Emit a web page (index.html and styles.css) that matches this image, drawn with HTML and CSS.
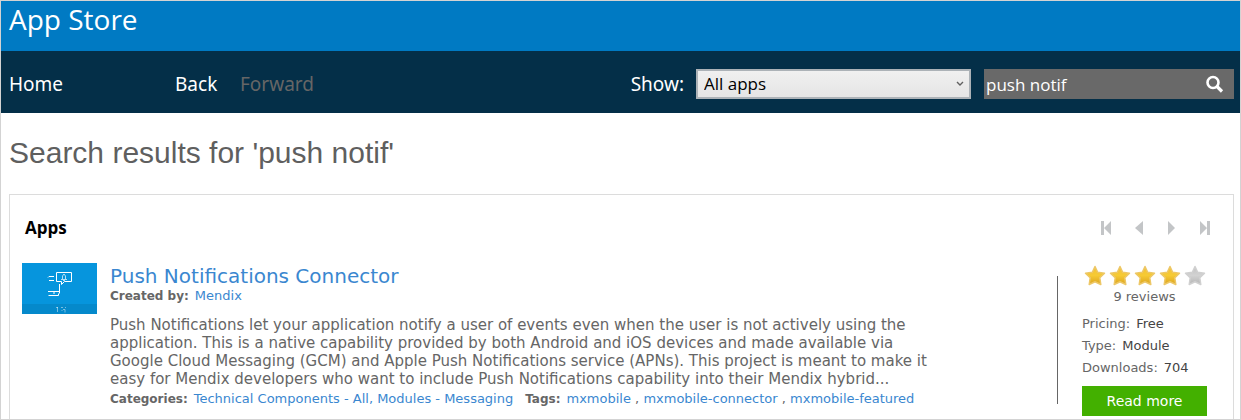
FILE: index.html
```html
<!DOCTYPE html>
<html lang="en">
<head>
<meta charset="utf-8">
<title>App Store</title>
<link rel="stylesheet" href="styles.css">
</head>
<body>
<svg class="defs" aria-hidden="true">
  <defs>
    <linearGradient id="gold" x1="0" y1="0" x2="0" y2="1"><stop offset="0" stop-color="#f3c238"/><stop offset=".5" stop-color="#f6ca34"/><stop offset="1" stop-color="#dba31f"/></linearGradient>
    <linearGradient id="grey" x1="0" y1="0" x2="0" y2="1"><stop offset="0" stop-color="#c2c2c2"/><stop offset=".5" stop-color="#d2d2d2"/><stop offset="1" stop-color="#b4b4b4"/></linearGradient>
    <path id="star" d="M11 1.500L13.700 7.200L20.500 8.200L15.800 12.800L16.800 19.500L11 16.700L5.200 19.500L6.200 12.800L1.500 8.200L8.300 7.200Z" stroke-width="1.500" stroke-linejoin="round"/>
  </defs>
</svg>
<div class="window">
  <header class="titlebar">App Store</header>
  <nav class="toolbar">
    <a class="home" href="#">Home</a>
    <a class="back" href="#">Back</a>
    <span class="forward">Forward</span>
    <div class="filters">
      <label for="show">Show:</label>
      <div class="select-box">
        <select id="show"><option>All apps</option></select>
        <svg class="chevron" width="8" height="6" viewBox="0 0 8 6" aria-hidden="true"><path d="M1 1l3 3 3-3" fill="none" stroke="#606060" stroke-width="1.400"/></svg>
      </div>
      <form class="search">
        <input type="text" value="push notif" aria-label="Search apps">
        <button type="button" aria-label="Search"><svg width="20" height="20" viewBox="0 0 20 20"><circle cx="8" cy="8.500" r="5.500" fill="none" stroke="#fff" stroke-width="2.600"/><path d="M12 12.500l5 5" stroke="#fff" stroke-width="3.200"/></svg></button>
      </form>
    </div>
  </nav>
  <main class="content">
    <h1>Search results for 'push notif'</h1>
    <section class="panel">
      <div class="panel-head">
        <h2>Apps</h2>
        <div class="pager">
          <button aria-label="First page"><svg width="12" height="14" viewBox="0 0 12 14"><path d="M1 0h3v14H1zM11 0v14L4 7z"/></svg></button>
          <button aria-label="Previous page"><svg width="12" height="14" viewBox="0 0 12 14"><path d="M10 0v14L2 7z"/></svg></button>
          <button aria-label="Next page"><svg width="12" height="14" viewBox="0 0 12 14"><path d="M2 0v14l7-7z"/></svg></button>
          <button aria-label="Last page"><svg width="12" height="14" viewBox="0 0 12 14"><path d="M8 0h3v14H8zM1 0v14l7-7z"/></svg></button>
        </div>
      </div>
      <article class="app">
        <svg class="thumb" width="75" height="51" viewBox="0 0 75 51" role="img" aria-label="Push Notifications Connector">
          <path fill="#0695dd" d="M0 0h75v51H0z"/><path fill="#0589cb" d="M0 41h75v10H0z"/>
          <g fill="none" stroke="#fff">
            <path d="M34.500 9.500h15v9h-7l-3 3v-3h-5zM26 14.500l1-1h5M27 17.500h5M37.500 21v9.500M26 28.500h12M26.500 32.500h10v-2M32 29v2"/>
            <path stroke-opacity=".7" d="M39 16.500h6M40.500 16v-3l1.500-2 1.500 2v3M41 17.500h2"/>
            <path stroke-opacity=".45" d="M34 44.500h2M35.500 44v5M39 44.500h2M41 46.500h2v3M43 44.500h1M40 47v1"/>
          </g>
        </svg>
        <div class="info">
          <h3><a href="#">Push Notifications Connector</a></h3>
          <p class="meta"><b>Created by:</b><a href="#">Mendix</a></p>
          <p class="summary">Push Notifications let your application notify a user of events even when the user is not actively using the application. This is a native capability provided by both Android and iOS devices and made available via Google Cloud Messaging (GCM) and Apple Push Notifications service (APNs). This project is meant to make it easy for Mendix developers who want to include Push Notifications capability into their Mendix hybrid...</p>
          <p class="meta"><b>Categories:</b><a href="#">Technical Components - All, Modules - Messaging</a><b class="tags">Tags:</b><a href="#">mxmobile</a> , <a href="#">mxmobile-connector</a> , <a href="#">mxmobile-featured</a></p>
        </div>
        <aside class="facts">
          <div class="stars" role="img" aria-label="4 out of 5 stars">
            <svg viewBox="0 0 125 21" width="125" height="21"><g fill="url(#gold)" stroke="#edc766"><use href="#star" x="2"/><use href="#star" x="27"/><use href="#star" x="52"/><use href="#star" x="77"/></g><use href="#star" x="102" fill="url(#grey)" stroke="#d0d0d0"/></svg>
          </div>
          <div class="reviews">9 reviews</div>
          <dl>
            <div><dt>Pricing:</dt><dd>Free</dd></div>
            <div><dt>Type:</dt><dd>Module</dd></div>
            <div><dt>Downloads:</dt><dd>704</dd></div>
          </dl>
          <button class="more">Read more</button>
        </aside>
      </article>
    </section>
  </main>
</div>
</body>
</html>
```
FILE: styles.css
```css
* { box-sizing: border-box; }
body, h1, h2, h3, p, dl, dd { margin: 0; }
body { font-family: "DejaVu Sans", Verdana, sans-serif; color: #666; background: #fff; }
a { color: #3a87d0; text-decoration: none; }
button { border: 0; padding: 0; background: none; font: inherit; cursor: pointer; }
svg { display: block; }
.defs { position: absolute; width: 0; height: 0; }
.window { display: flex; flex-direction: column; min-height: 100vh; border: 1px solid #d3d3d3; }

.titlebar { height: 50px; padding-left: 8px; background: #007ac3; color: #fff; font: 28px/36px "Open Sans", "Noto Sans", sans-serif; }
.toolbar { display: flex; align-items: center; height: 62px; padding: 4px 6px 0 8px; background: #042f48; color: #fff; font: 19px/30px "Noto Sans", "Open Sans", sans-serif; }
.toolbar a { color: #fff; }
.home { width: 166px; }
.back { width: 65px; }
.forward { color: #666; }
.filters { display: flex; align-items: center; margin-left: auto; }
.filters label { margin-right: 12px; }
.select-box { position: relative; width: 275px; margin-right: 13px; }
.select-box select { display: block; appearance: none; width: 100%; height: 30px; padding: 0 6px; border: 2px solid #acb2b7; border-radius: 0; background: linear-gradient(#f0f0f0, #e5e5e5); color: #000; font: 17px/26px "Open Sans", "Noto Sans", sans-serif; }
.chevron { position: absolute; right: 7px; top: 12px; }
.search { display: flex; align-items: center; width: 250px; height: 30px; padding: 0 9px 0 2px; background: #696969; }
.search input { flex: 1; min-width: 0; height: 30px; padding: 0; border: 0; outline: 0; background: none; color: #fff; font: 17px/28px "Open Sans", "Noto Sans", sans-serif; }

.content { display: flex; flex: 1; flex-direction: column; padding: 0 6px 0 8px; }
h1 { padding: 20px 0 21px; font: 30px/40px "Liberation Sans", Arial, sans-serif; color: #5f5f5f; }
.panel { flex: 1; padding: 16px 26px 0 12px; border: 1px solid #dcdcdc; border-bottom: 0; }
.panel-head { display: flex; align-items: center; justify-content: space-between; height: 34px; padding-left: 3px; }
h2 { font: bold 17px/24px "Open Sans", "Noto Sans", sans-serif; color: #000; }
.pager { display: flex; gap: 21px; margin-right: -4px; fill: #c3c5c7; }

.app { display: flex; padding-top: 18px; }
.thumb { flex: none; margin-right: 13px; }
.info { flex: 1; min-width: 0; }
h3 { font-size: 20px; line-height: 26px; font-weight: 400; }
.meta { font-size: 13px; line-height: 14px; }
.meta b { margin-right: 6px; font-size: 12px; }
.meta .tags { margin-left: 12px; }
.summary { max-width: 840px; padding: 13px 0 4px; font-size: 15px; line-height: 18px; }
.facts { flex: none; width: 150px; margin-top: 13px; padding-left: 24px; border-left: 1px solid #666; height: 128px; }
.stars { margin-top: -11px; }
.reviews { padding-top: 3px; text-align: center; font-size: 13px; line-height: 16px; }
dl { padding-top: 8px; font-size: 13px; line-height: 22px; }
dl div { display: flex; gap: 6px; }
dd { color: #444; }
.more { width: 125px; height: 30px; margin-top: 7px; background: #43b000; color: #fff; font-size: 14px; }
```
